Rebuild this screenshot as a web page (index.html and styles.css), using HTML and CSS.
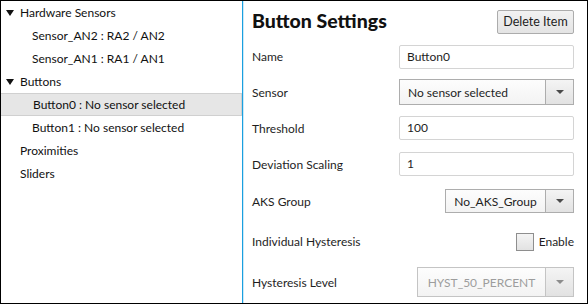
FILE: index.html
```html
<!DOCTYPE html>
<html lang="en">

<head>
    <meta charset="UTF-8">
    <meta name="viewport" content="width=device-width, initial-scale=1.0">
    <link rel="stylesheet" href="styles.css">
</head>

<body>
    <div class="window">
        <div class="tree">
            <div class="node open">Hardware Sensors</div>
            <div class="node child">Sensor_AN2 : RA2 / AN2</div>
            <div class="node child">Sensor_AN1 : RA1 / AN1</div>
            <div class="node open">Buttons</div>
            <div class="node child selected">Button0 : No sensor selected</div>
            <div class="node child">Button1 : No sensor selected</div>
            <div class="node">Proximities</div>
            <div class="node">Sliders</div>
        </div>
        <div class="splitter"></div>
        <div class="settings">
            <h1 class="title">Button Settings</h1>
            <button class="btn">Delete Item</button>

            <label class="label">Name</label>
            <div class="textbox wide">Button0</div>

            <label class="label">Sensor</label>
            <div class="combo wide">
                <span class="combo-text">No sensor selected</span>
                <span class="combo-btn"><span class="caret"></span></span>
            </div>

            <label class="label">Threshold</label>
            <div class="textbox wide">100</div>

            <label class="label">Deviation Scaling</label>
            <div class="textbox wide">1</div>

            <label class="label">AKS Group</label>
            <div class="combo aks">
                <span class="combo-text center">No_AKS_Group</span>
                <span class="combo-btn"><span class="caret"></span></span>
            </div>

            <label class="label">Individual Hysteresis</label>
            <div class="check">
                <span class="box"></span>Enable
            </div>

            <label class="label">Hysteresis Level</label>
            <div class="combo level disabled">
                <span class="combo-text center">HYST_50_PERCENT</span>
                <span class="combo-btn"><span class="caret"></span></span>
            </div>
        </div>
    </div>
</body>

</html>
```

FILE: styles.css
```css
body {
    margin: 0;
    font-family: 'Lato', 'Liberation Sans', sans-serif;
    font-size: 12px;
    color: #1e1e1e;
}

.window {
    width: 588px;
    height: 304px;
    border: 1px solid #000;
    box-sizing: border-box;
    display: flex;
    background: #fff;
}

/* left tree */
.tree {
    width: 241px;
    flex-shrink: 0;
}

.node {
    height: 23px;
    line-height: 23px;
    padding-left: 19px;
    position: relative;
    box-sizing: border-box;
    white-space: nowrap;
    color: #111;
}

.node.open::before {
    content: "";
    position: absolute;
    left: 5px;
    top: 9px;
    border-left: 4px solid transparent;
    border-right: 4px solid transparent;
    border-top: 6px solid #111;
}

.node.child {
    padding-left: 31px;
}

.node.selected {
    background-color: #e6e6e6;
    border: 1px solid #d0d0d0;
    border-left: none;
    line-height: 21px;
    padding-left: 32px;
}

.splitter {
    width: 2px;
    flex-shrink: 0;
    background: linear-gradient(to right, #1aa0e0 50%, #cde9f7 50%);
}

/* right form */
.settings {
    flex: 1;
    padding: 0 13px 0 8px;
    display: grid;
    grid-template-columns: 1fr auto;
    grid-template-rows: 38px 35px 36px 36px 36px 38px 43px 38px;
    align-items: center;
}

.title {
    margin: 0;
    font-size: 19.5px;
    font-weight: 900;
    color: #111;
}

.btn {
    justify-self: end;
    height: 24px;
    width: 77px;
    margin-top: 3px;
    padding: 0;
    font-family: inherit;
    font-size: 12.5px;
    color: #1e1e1e;
    border: 1px solid #acacac;
    border-radius: 2px;
    background: linear-gradient(#f2f2f2, #e4e4e4);
}

.label {
    white-space: nowrap;
}

.textbox {
    justify-self: end;
    height: 24px;
    box-sizing: border-box;
    border: 1px solid #d4d4d4;
    border-radius: 2px;
    padding: 0 7px;
    line-height: 22px;
}

.wide {
    width: 175px;
}

.combo {
    justify-self: end;
    height: 26px;
    box-sizing: border-box;
    display: flex;
    border: 1px solid #adadad;
    background: linear-gradient(#fdfdfd, #f3f3f3);
}

.combo.aks {
    width: 129px;
    height: 24px;
}

.combo.level {
    width: 157px;
    height: 30px;
}

.combo-text {
    flex: 1;
    padding-left: 8px;
    display: flex;
    align-items: center;
}

.combo-text.center {
    justify-content: center;
    padding-left: 0;
}

.combo-btn {
    width: 27px;
    border-left: 1px solid #adadad;
    background: linear-gradient(#f4f4f4, #e2e2e2);
    display: flex;
    align-items: center;
    justify-content: center;
}

.caret {
    width: 0;
    height: 0;
    border-left: 4px solid transparent;
    border-right: 4px solid transparent;
    border-top: 4px solid #4a4a4a;
}

.combo.disabled {
    border-color: #c4c4c4;
    color: #9d9d9d;
}

.combo.disabled .combo-btn {
    border-left-color: #c4c4c4;
}

.combo.disabled .caret {
    border-top-color: #8c8c8c;
}

.check {
    justify-self: end;
    display: flex;
    align-items: center;
    gap: 5px;
}

.check .box {
    width: 18px;
    height: 18px;
    box-sizing: border-box;
    border: 1px solid #8e8e8e;
    background: linear-gradient(#f4f4f4, #e2e2e2);
}
```
